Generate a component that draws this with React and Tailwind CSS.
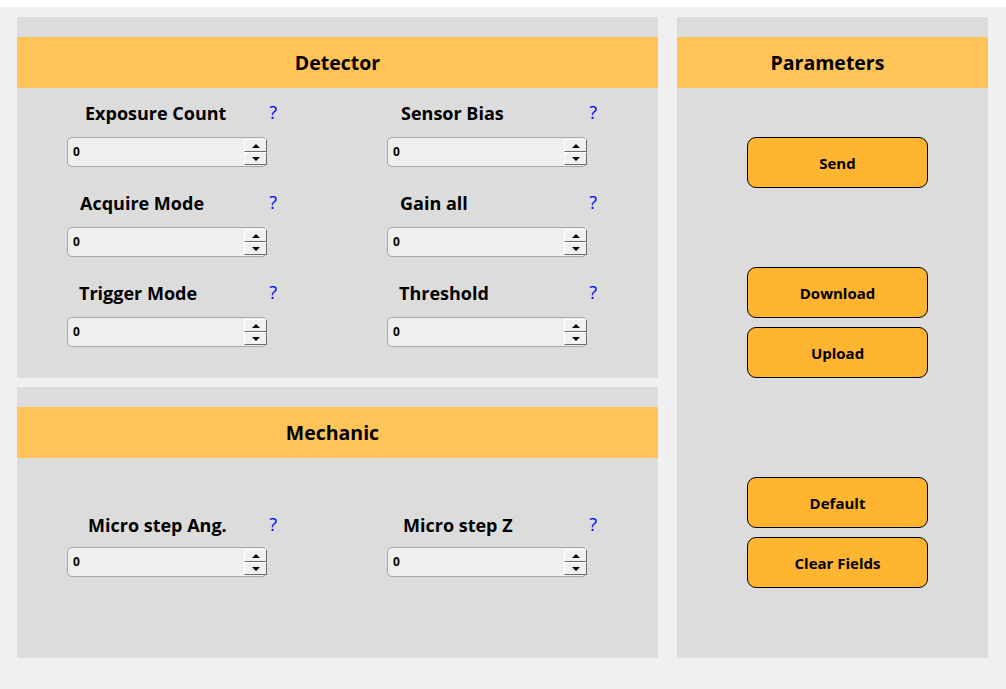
import React from 'react'

const font = { fontFamily: '"Open Sans", "Noto Sans", sans-serif' }

function Spin({ value = 0 }) {
  return (
    <div className="relative w-[200px] h-[30px] rounded-[5px] border border-[#a7a7a7] bg-[#efefef] flex items-center pl-[5px]">
      <span className="text-[12px] font-bold text-black">{value}</span>
      <div className="absolute right-[-1px] top-0 bottom-0 w-[23px] flex flex-col py-[1px]">
        <div className="flex-1 flex items-center justify-center bg-[#f0f0f0] border border-t-white border-l-white border-r-[#6b6b6b] border-b-[#6b6b6b]">
          <span className="w-0 h-0 border-l-[4px] border-r-[4px] border-b-[4px] border-l-transparent border-r-transparent border-b-black" />
        </div>
        <div className="flex-1 flex items-center justify-center bg-[#f0f0f0] border border-t-white border-l-white border-r-[#6b6b6b] border-b-[#6b6b6b]">
          <span className="w-0 h-0 border-l-[4px] border-r-[4px] border-t-[4px] border-l-transparent border-r-transparent border-t-black" />
        </div>
      </div>
    </div>
  )
}

function Field({ label, offset, gap = 12 }) {
  return (
    <div className="flex flex-col">
      <div className="w-[210px] h-[24px] flex items-center justify-between">
        <span className="text-[18px] font-bold text-black leading-none" style={{ marginLeft: offset }}>{label}</span>
        <span className="text-[18px] text-[#0000ff] leading-none font-normal mb-[2px]">?</span>
      </div>
      <div style={{ marginTop: gap }}>
        <Spin />
      </div>
    </div>
  )
}

function Header({ title, className = '' }) {
  return (
    <div className={`h-[51px] bg-[#ffc357] flex items-center justify-center ${className}`}>
      <h2 className="text-[19.5px] font-bold text-black">{title}</h2>
    </div>
  )
}

function Btn({ children, className = '' }) {
  return (
    <button className={`w-[181px] h-[51px] rounded-[9px] border border-black bg-[#ffb52f] text-[15px] font-bold text-black pt-[1px] ${className}`}>
      {children}
    </button>
  )
}

export default function App() {
  return (
    <div className="w-[1006px] h-[689px] bg-[#f0f0f0] border-t-[7px] border-white flex gap-[19px] pt-[10px] pl-[17px]" style={font}>
      <div className="w-[641px] flex flex-col gap-[9px]">
        <div className="h-[361px] bg-[#dcdcdc] pt-[20px]">
          <Header title="Detector" />
          <div className="grid pl-[50px] pt-[13px] gap-y-[24px]" style={{ gridTemplateColumns: '320px 270px' }}>
            <Field label="Exposure Count" offset={18} />
            <Field label="Sensor Bias" offset={14} />
            <Field label="Acquire Mode" offset={13} />
            <Field label="Gain all" offset={13} />
            <Field label="Trigger Mode" offset={12} />
            <Field label="Threshold" offset={12} />
          </div>
        </div>
        <div className="h-[271px] bg-[#dcdcdc] pt-[20px]">
          <Header title="Mechanic" className="pr-[10px]" />
          <div className="grid pl-[50px] pt-[55px]" style={{ gridTemplateColumns: '320px 270px' }}>
            <Field label="Micro step Ang." offset={21} gap={10} />
            <Field label="Micro step Z" offset={16} gap={10} />
          </div>
        </div>
      </div>
      <div className="w-[311px] h-[641px] bg-[#dcdcdc] pt-[20px] flex flex-col">
        <Header title="Parameters" className="pr-[10px]" />
        <div className="flex flex-col pl-[70px] pt-[49px]">
          <Btn>Send</Btn>
          <Btn className="mt-[79px]">Download</Btn>
          <Btn className="mt-[9px]">Upload</Btn>
          <Btn className="mt-[99px]">Default</Btn>
          <Btn className="mt-[9px]">Clear Fields</Btn>
        </div>
      </div>
    </div>
  )
}
